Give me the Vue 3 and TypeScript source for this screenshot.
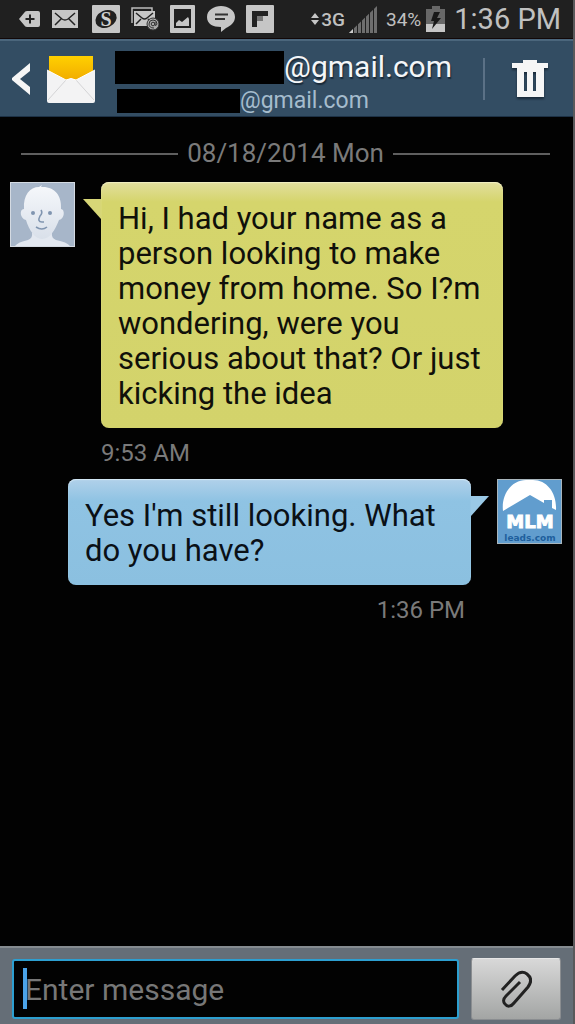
<script setup lang="ts">
import { ref } from 'vue'

interface Message {
  id: number
  text: string
  time: string
  mine: boolean
}

const messages: Message[] = [
  {
    id: 1,
    text: 'Hi, I had your name as a person looking to make money from home. So I?m wondering, were you serious about that? Or just kicking the idea',
    time: '9:53 AM',
    mine: false,
  },
  { id: 2, text: "Yes I'm still looking. What do you have?", time: '1:36 PM', mine: true },
]

const draft = ref('')
const signalBars = [0, 1, 2, 3, 4, 5]
</script>

<template>
  <div class="phone">
    <div class="status">
      <div class="notices">
        <svg width="22" height="28" viewBox="0 0 22 28">
          <path d="M8 6H19Q21 6 21 8V20Q21 22 19 22H8Q6 22 5 20L0 14L5 8Q6 6 8 6Z" fill="#c6c6c6" />
          <path d="M6.500 14H15.500M11 9.500V18.500" stroke="#222" stroke-width="2" />
        </svg>
        <svg width="29" height="28" viewBox="0 0 29 28">
          <rect x="0" y="5" width="26" height="18" fill="#c6c6c6" />
          <path d="M3 8L10 14Q13 16 16 14L23 8M3 20L9 14M23 20L17 14" fill="none" stroke="#222" stroke-width="1.500" />
        </svg>
        <svg width="28" height="28" viewBox="0 0 28 28">
          <rect width="28" height="28" rx="1" fill="#c6c6c6" />
          <ellipse cx="14" cy="14" rx="11" ry="8.500" fill="#202020" transform="rotate(-25 14 14)" />
          <text x="14" y="21" text-anchor="middle" class="coin">S</text>
        </svg>
        <svg width="28" height="28" viewBox="0 0 28 28">
          <path d="M1 18V3H21V6" fill="none" stroke="#bbb" stroke-width="1.500" />
          <rect x="3" y="6" width="21" height="15" fill="#c6c6c6" />
          <path d="M5 8L11 13Q13.500 15 16 13L22 8M5 19L10 14M19 16L17 14" fill="none" stroke="#222" stroke-width="1.500" />
          <circle cx="22" cy="19" r="6" fill="#aaa" stroke="#333" />
          <circle cx="22" cy="19" r="1.800" fill="none" stroke="#333" />
          <path d="M24 17V20Q25 21.500 26 19Q26 15 22 15Q18 15 18 19Q18 23 23 23" fill="none" stroke="#333" />
        </svg>
        <svg width="26" height="28" viewBox="0 0 26 28">
          <rect y="0" width="25" height="28" rx="1" fill="#c6c6c6" />
          <rect x="4" y="4" width="17" height="19" fill="#202020" />
          <path d="M6 21V18L9 15L12 17L18 12L19 14V21Z" fill="#c6c6c6" />
        </svg>
        <svg width="28" height="28" viewBox="0 0 28 28">
          <path d="M14 1C21 1 28 5 28 12C28 18 23 21 19 23L14 27V22C6 22 0 19 0 12C0 5 7 1 14 1Z" fill="#c6c6c6" />
          <path d="M8 9.500H21M8 14H18" stroke="#333" stroke-width="1.800" />
        </svg>
        <svg width="29" height="28" viewBox="0 0 29 28">
          <rect width="28" height="28" rx="1" fill="#c6c6c6" />
          <path d="M6 6H22V11H11V22H6Z" fill="#222" />
          <path d="M11 11H17V16H11Z" fill="#777" />
        </svg>
      </div>
      <div class="system">
        <svg width="8" height="14" viewBox="0 0 8 14">
          <path d="M4 1L8 6H0ZM4 13L8 8H0Z" fill="#c6c6c6" />
        </svg>
        <span class="network">3G</span>
        <svg class="signal" width="28" height="27" viewBox="0 0 28 27">
          <path d="M0 27L28 0V27Z" fill="#6e6e6e" />
          <path d="M0 27L4 23V27Z" fill="#ccc" />
          <path v-for="n in signalBars" :key="n" :d="`M${4.5 + n * 4} 0V27`" stroke="#202020" stroke-width="1" />
        </svg>
        <span class="percent">34%</span>
        <svg class="battery" width="20" height="27" viewBox="0 0 20 27">
          <path d="M6 0H14V3H19V26H0V3H6Z" fill="#686868" />
          <rect y="18" width="19" height="8" fill="#c6c6c6" />
          <path d="M8 6H14L11 12H15L6 23L8 15H5Z" fill="#181818" />
        </svg>
        <span class="clock">1:36 PM</span>
      </div>
    </div>

    <header class="header">
      <button class="plain back" type="button" aria-label="Back">
        <svg width="18" height="32" viewBox="0 0 18 32">
          <path d="M18 0V8L8 16L18 24V32L0 17V15Z" fill="#f6f6f6" />
        </svg>
      </button>
      <svg class="mail" width="48" height="48" viewBox="0 0 48 48">
        <defs>
          <linearGradient id="flap" x1="0" y1="0" x2="0" y2="1">
            <stop offset="0" stop-color="#ffd000" />
            <stop offset="1" stop-color="#f0a800" />
          </linearGradient>
        </defs>
        <path d="M2 1H46V28H2Z" fill="url(#flap)" />
        <path d="M0 15L19 25Q24 22 29 25L48 15V46Q48 48 46 48H2Q0 48 0 46Z" fill="#f3f3f4" />
        <path d="M1 45L19 25M47 45L29 25" stroke="#d4d4d6" />
        <path d="M0 15L19 25Q24 22 29 25L48 15" fill="none" stroke="#fff" />
      </svg>
      <div class="contact">
        <div class="line name"><span class="mask"></span><span>@gmail.com</span></div>
        <div class="line address"><span class="mask"></span><span>@gmail.com</span></div>
      </div>
      <span class="divider"></span>
      <button class="plain trash" type="button" aria-label="Delete">
        <svg width="36" height="38" viewBox="0 0 36 38">
          <path d="M0 3H11V0H25V3H36V8H32V37H5V8H0ZM12 12V31H15V12ZM21 12V31H24V12Z" fill="#f6f6f6" fill-rule="evenodd" />
        </svg>
      </button>
    </header>

    <main class="thread">
      <div class="date"><span>08/18/2014 Mon</span></div>
      <article v-for="m in messages" :key="m.id" class="message" :class="{ mine: m.mine }">
        <svg v-if="!m.mine" class="avatar" viewBox="0 0 65 65">
          <defs>
            <linearGradient id="face" x1="0" y1="0" x2="0" y2="1">
              <stop offset="0" stop-color="#f6f8fb" />
              <stop offset="1" stop-color="#d9e0ea" />
            </linearGradient>
          </defs>
          <rect x="0.500" y="0.500" width="64" height="64" fill="#a7b6c9" stroke="#d4dae2" />
          <path d="M5 64Q8 60 18 58Q23 56 22 51H42Q41 56 46 58Q57 60 60 64Z" fill="#e3e8f0" />
          <path d="M14 27C13 13 20 5 29 5L32 3L31 5C44 4 52 13 51 27C55 27 55 37 49 38C45 48 40 57 32 57C25 57 19 48 16 38C10 37 9 27 14 27Z" fill="url(#face)" />
          <circle cx="23" cy="31" r="2" fill="#8095b0" />
          <circle cx="40" cy="31" r="2" fill="#8095b0" />
          <path d="M31 28Q33 31 30 34Q27 40 32 40H34M26 45Q32 49 37 45" fill="none" stroke="#8095b0" stroke-width="1.600" />
        </svg>
        <svg v-else class="avatar" viewBox="0 0 65 65">
          <rect x="0.500" y="0.500" width="64" height="64" fill="#619dce" stroke="#a9b6bd" />
          <path d="M6 32C4 15 15 1 29 1H36C50 1 60 14 59 31L55 29V21H47V24L33 16Z" fill="#fff" />
          <text x="33" y="49" text-anchor="middle" class="logo">MLM</text>
          <text x="33" y="62" text-anchor="middle" class="logo-sub">leads.com</text>
        </svg>
        <div class="body">
          <p class="bubble">{{ m.text }}</p>
          <time class="time">{{ m.time }}</time>
        </div>
      </article>
    </main>

    <form class="composer" @submit.prevent>
      <div class="field">
        <input v-model="draft" type="text" placeholder="Enter message" aria-label="Enter message" />
        <span class="caret"></span>
      </div>
      <button class="attach" type="button" aria-label="Attach">
        <svg width="32" height="38" viewBox="0 0 32 38">
          <path d="M2 20L15 6C19 2 23 1 27 4C32 8 31 13 28 17L14 33C11 37 7 37 5 34C3 32 3 29 6 26L20 12" fill="none" stroke="#222" stroke-width="3" />
        </svg>
      </button>
    </form>
  </div>
</template>

<style>
body {
  margin: 0;
  background: #000;
}
</style>

<style scoped>
.phone {
  display: flex;
  flex-direction: column;
  box-sizing: border-box;
  min-height: 100vh;
  border-right: 2px solid #59595b;
  background: #020202;
  font-family: Roboto, "Liberation Sans", sans-serif;
}
.phone * {
  box-sizing: border-box;
}
svg {
  display: block;
  flex: none;
}
.status {
  display: flex;
  justify-content: space-between;
  align-items: center;
  height: 39px;
  padding: 0 12px 0 19px;
  border-bottom: 1px solid #120808;
  background: #202020;
  color: #c0c0c0;
  white-space: nowrap;
}
.notices {
  display: flex;
  align-items: center;
  gap: 11px;
}
.system {
  display: flex;
  align-items: center;
}
.coin {
  font: bold 20px "Liberation Serif", serif;
  fill: #d0d0d0;
}
.network {
  margin-left: 2px;
  font-size: 19px;
  font-weight: 500;
}
.signal {
  margin-left: 4px;
}
.percent {
  margin-left: 9px;
  font-size: 19px;
}
.battery {
  margin: 0 8px 0 5px;
}
.clock {
  font-size: 29px;
}
.header {
  display: flex;
  align-items: center;
  height: 78px;
  padding: 0 25px 0 12px;
  border-top: 2px solid #4b667c;
  border-bottom: 1px solid #1d3145;
  background: #334d63;
}
.plain {
  padding: 0;
  border: 0;
  background: none;
}
.mail {
  margin-left: 17px;
}
.contact {
  display: flex;
  flex: 1;
  flex-direction: column;
  gap: 1px;
  min-width: 0;
  margin-left: 20px;
  padding-top: 8px;
}
.line {
  display: flex;
  align-items: center;
  white-space: nowrap;
}
.mask {
  flex: none;
  background: #000;
}
.name {
  color: #f4f6f8;
  font-size: 30px;
  line-height: 36px;
  text-shadow: 1px 2px 1px #1a2a39;
}
.name .mask {
  width: 169px;
  height: 33px;
}
.address {
  padding-left: 2px;
  color: #a5bccd;
  font-size: 23px;
  line-height: 30px;
}
.address .mask {
  width: 123px;
  height: 24px;
}
.divider {
  width: 2px;
  height: 42px;
  margin-right: 27px;
  background: #5b7186;
}
.trash {
  filter: drop-shadow(0 2px 1px #1a2a39);
}
.thread {
  flex: 1;
  padding: 20px 0;
}
.date {
  display: flex;
  align-items: center;
  gap: 9px;
  margin-bottom: 12px;
  padding: 0 23px 0 21px;
  color: #7a7a7a;
  font-size: 26px;
  line-height: 33px;
}
.date::before,
.date::after {
  flex: 1;
  height: 2px;
  background: #5f5f5f;
  content: "";
}
.message {
  display: flex;
  align-items: flex-start;
  gap: 26px;
  margin-bottom: 11px;
  padding: 0 70px 0 10px;
}
.message.mine {
  flex-direction: row-reverse;
  padding: 0 11px 0 68px;
}
.avatar {
  width: 65px;
  height: 65px;
}
.logo {
  font: bold 18px "DejaVu Sans", sans-serif;
  fill: #fff;
  stroke: #fff;
  stroke-width: 1px;
}
.logo-sub {
  font: bold 9px "DejaVu Sans", sans-serif;
  fill: #1e5f9d;
}
.body {
  flex: 1;
  min-width: 0;
}
.bubble {
  position: relative;
  margin: 0;
  padding: 19px 17px 17px;
  border-radius: 8px;
  background: linear-gradient(#e2df9e, #d5d56c 20px, #d3d36b);
  box-shadow: inset 0 1px 1px #f1efc4;
  color: #10100a;
  font-size: 31px;
  line-height: 35px;
}
.bubble::before {
  position: absolute;
  top: 17px;
  right: 100%;
  width: 18px;
  height: 20px;
  background: #d7d677;
  clip-path: polygon(0 0, 100% 0, 100% 100%);
  content: "";
}
.mine .bubble {
  background: linear-gradient(#b1d1ea, #8fc3e3 22px, #8bc0e0);
  box-shadow: inset 0 1px 1px #d5e8f6;
  color: #0a1016;
}
.mine .bubble::before {
  right: auto;
  left: 100%;
  background: #9ac9e6;
  clip-path: polygon(0 0, 100% 0, 0 100%);
}
.time {
  display: block;
  padding-top: 10px;
  color: #7a7a7a;
  font-size: 24px;
  line-height: 30px;
}
.mine .time {
  padding-right: 6px;
  text-align: right;
}
.composer {
  display: flex;
  align-items: center;
  gap: 12px;
  height: 78px;
  padding: 6px 12px 0;
  border-top: 2px solid #858b90;
  background: #656e77;
}
.field {
  position: relative;
  flex: 1;
  min-width: 0;
}
.field input {
  display: block;
  width: 100%;
  height: 60px;
  padding: 0 11px;
  border: 2px solid #2d9fd0;
  border-radius: 3px;
  outline: 0;
  background: #020202;
  color: #ddd;
  font: 30px Roboto, "Liberation Sans", sans-serif;
}
.field input::placeholder {
  color: #777;
  opacity: 1;
}
.caret {
  position: absolute;
  top: 9px;
  left: 11px;
  width: 4px;
  height: 41px;
  background: #4ba3e8;
}
.attach {
  display: flex;
  align-items: center;
  justify-content: center;
  width: 90px;
  height: 62px;
  padding: 0;
  border: 1px solid #8a8d90;
  border-top-color: #e6e6e6;
  border-radius: 3px;
  background: linear-gradient(#d8d8d8, #a3a5a4);
}
</style>
